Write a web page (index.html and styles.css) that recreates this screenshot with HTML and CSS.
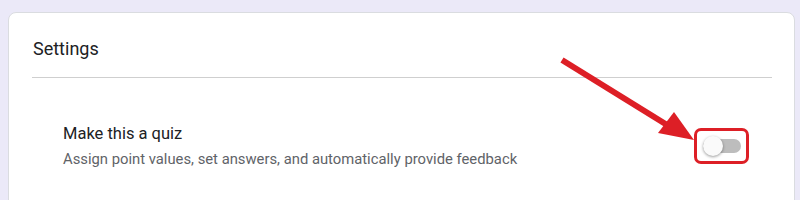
FILE: index.html
```html
<!DOCTYPE html>
<html lang="en">
<head>
  <meta charset="UTF-8" />
  <link rel="stylesheet" href="styles.css">
</head>
<body>
  <div class="card">
    <div class="card-header">Settings</div>
    <div class="setting-row">
      <div class="setting-text">
        <div class="setting-title">Make this a quiz</div>
        <div class="setting-desc">Assign point values, set answers, and automatically provide feedback</div>
      </div>
      <div class="highlight">
        <div class="switch">
          <div class="switch-track"></div>
          <div class="switch-thumb"></div>
        </div>
      </div>
    </div>
  </div>

  <!-- annotation arrow -->
  <svg class="arrow" width="800" height="200" viewBox="0 0 800 200">
    <line x1="562" y1="60" x2="672" y2="128" stroke="#dd1f26" stroke-width="6" />
    <polygon points="694,140 658,133 674,112" fill="#dd1f26" />
  </svg>
</body>
</html>
```

FILE: styles.css
```css
html, body {
  margin: 0;
  padding: 0;
  height: 100%;
  overflow: hidden;
  background: #ebe9f8;
  font-family: Roboto, "Liberation Sans", sans-serif;
  position: relative;
}

.card {
  margin: 12px 5px 0 8px;
  min-height: 240px;
  background: #fff;
  border: 1px solid #dadce0;
  border-radius: 8px;
}

.card-header {
  margin: 0 22px 0 23px;
  padding: 24px 0 16px 1px;
  font-size: 18px;
  line-height: 24px;
  color: #202124;
  border-bottom: 1px solid #cfcfcf;
}

.setting-row {
  display: flex;
  align-items: center;
  justify-content: space-between;
  padding: 45px 45px 0 54px;
}

.setting-title {
  font-size: 16.5px;
  line-height: 22px;
  color: #202124;
}

.setting-desc {
  margin-top: 4px;
  font-size: 14.8px;
  line-height: 20px;
  color: #5f6368;
}

.highlight {
  width: 49px;
  height: 30px;
  border: 3px solid #dd1f26;
  border-radius: 7px;
  display: flex;
  align-items: center;
  justify-content: center;
}

.switch {
  position: relative;
  width: 38px;
  height: 20px;
  display: flex;
  align-items: center;
}

.switch-track {
  width: 38px;
  height: 14px;
  border-radius: 7px;
  background: #bdbdbd;
}

.switch-thumb {
  position: absolute;
  left: 0;
  top: 0;
  width: 20px;
  height: 20px;
  border-radius: 50%;
  background: #fafafa;
  box-shadow: 0 1px 3px rgba(0, 0, 0, 0.4);
}

.arrow {
  position: absolute;
  left: 0;
  top: 0;
  pointer-events: none;
}
```
